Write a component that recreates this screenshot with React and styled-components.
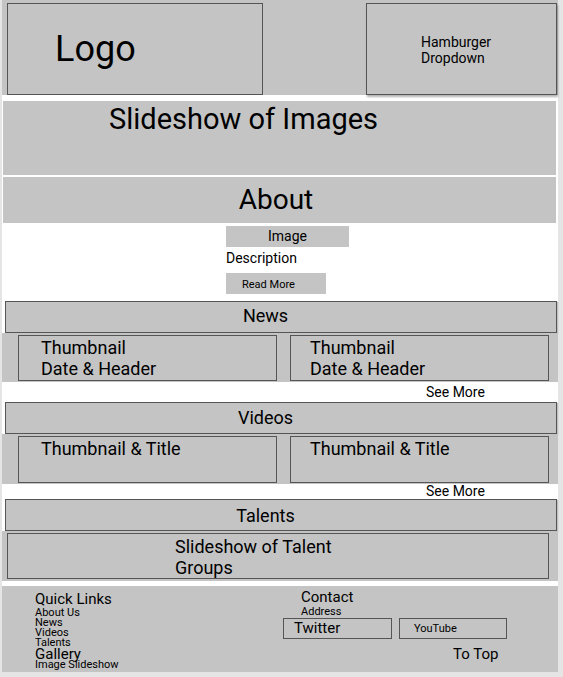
import React from 'react'
import styled, { createGlobalStyle } from 'styled-components'

const GlobalStyle = createGlobalStyle`
  body {
    margin: 0;
    background: #e5e5e5;
    font-family: Roboto, "Liberation Sans", sans-serif;
    color: #000;
  }
`

const Page = styled.div`
  width: 556px;
  margin-left: 2px;
  background: #fff;
  display: flex;
  flex-direction: column;
`

const Header = styled.header`
  height: 95px;
  box-sizing: border-box;
  background: #c4c4c4;
  display: flex;
  justify-content: space-between;
  align-items: flex-start;
  padding: 3px 1px 0 5px;
`

const LogoBox = styled.div`
  width: 256px;
  height: 92px;
  box-sizing: border-box;
  border: 1px solid #555;
  display: flex;
  align-items: center;
  padding-left: 47px;
  font-size: 36px;
`

const MenuBox = styled.div`
  width: 191px;
  height: 92px;
  box-sizing: border-box;
  border: 1px solid #555;
  box-shadow: 1px 2px 2px rgba(0, 0, 0, 0.3);
  display: flex;
  flex-direction: column;
  justify-content: center;
  padding: 2px 0 0 54px;
  font-size: 14px;
  line-height: 16px;
`

const Slideshow = styled.div`
  margin: 6px 2px 0 1px;
  height: 74px;
  background: #c4c4c4;
  padding-left: 106px;
  font-size: 29px;
  line-height: 36px;
`

const AboutBar = styled.div`
  margin: 2px 2px 0 1px;
  height: 46px;
  background: #c4c4c4;
  text-align: center;
  padding-right: 7px;
  font-size: 28px;
  line-height: 46px;
`

const AboutBody = styled.div`
  height: 78px;
  display: flex;
  flex-direction: column;
  align-items: flex-start;
  padding-left: 224px;
  font-size: 14px;
`

const ImageBox = styled.div`
  margin-top: 3px;
  width: 123px;
  height: 21px;
  background: #c4c4c4;
  text-align: center;
  line-height: 21px;
`

const Description = styled.div`
  margin-top: 3px;
  line-height: 16px;
`

const ReadMore = styled.div`
  margin-top: 7px;
  width: 100px;
  height: 21px;
  box-sizing: border-box;
  background: #c4c4c4;
  padding-left: 16px;
  font-size: 11px;
  line-height: 23px;
`

const SectionHeader = styled.div`
  margin: 0 1px 0 3px;
  height: 32px;
  box-sizing: border-box;
  background: #c4c4c4;
  border: 1px solid #555;
  box-shadow: 1px 1px 1px rgba(0, 0, 0, 0.25);
  text-align: center;
  padding-right: 31px;
  font-size: 18px;
  line-height: ${p => p.$lh || 29}px;
`

const Row = styled.div`
  background: #c4c4c4;
  height: ${p => p.$h}px;
  display: flex;
  align-items: flex-start;
  gap: 13px;
  padding: 2px 0 0 ${p => p.$left}px;
  box-sizing: border-box;
`

const Card = styled.div`
  width: ${p => p.$w || 259}px;
  height: ${p => p.$h || 46}px;
  box-sizing: border-box;
  border: 1px solid #555;
  padding: ${p => p.$top || 1}px 0 0 ${p => p.$left || 21}px;
  font-size: 18px;
  line-height: 21px;
`

const Line = styled.div``

const SeeMore = styled.div`
  height: ${p => p.$h}px;
  padding-left: 424px;
  font-size: 14px;
  line-height: ${p => p.$h}px;
`

const Gap = styled.div`
  height: 5px;
`

const Footer = styled.footer`
  height: 86px;
  box-sizing: border-box;
  background: #c4c4c4;
  display: grid;
  grid-template-columns: 248px 226px;
  padding: 4px 0 0 33px;
`

const LinkCol = styled.div`
  padding-top: 2px;
  display: flex;
  flex-direction: column;
`

const FootTitle = styled.div`
  font-size: 15px;
  line-height: ${p => p.$lh || 14}px;
  margin-bottom: ${p => p.$mb || 0}px;
`

const FootLink = styled.div`
  font-size: 11px;
  line-height: 10px;
`

const ContactCol = styled.div`
  display: flex;
  flex-direction: column;
`

const Indent = styled.div`
  padding-left: 18px;
  margin-top: ${p => p.$mt || 0}px;
  font-size: ${p => p.$size}px;
  line-height: ${p => p.$lh}px;
`

const Socials = styled.div`
  display: flex;
  gap: 7px;
`

const SocialBox = styled.div`
  width: ${p => p.$w}px;
  height: 21px;
  box-sizing: border-box;
  border: 1px solid #555;
  padding-left: ${p => p.$pad}px;
  font-size: ${p => p.$size}px;
  line-height: 19px;
`

const ToTop = styled.div`
  margin-top: 7px;
  padding-left: 170px;
  font-size: 15px;
  line-height: 16px;
`

const App = () => {
  return (
    <>
      <GlobalStyle />
      <Page>
        <Header>
          <LogoBox>Logo</LogoBox>
          <MenuBox>
            <Line>Hamburger</Line>
            <Line>Dropdown</Line>
          </MenuBox>
        </Header>

        <Slideshow>Slideshow of Images</Slideshow>
        <AboutBar>About</AboutBar>
        <AboutBody>
          <ImageBox>Image</ImageBox>
          <Description>Description</Description>
          <ReadMore>Read More</ReadMore>
        </AboutBody>

        <SectionHeader $lh={27}>News</SectionHeader>
        <Row $h={49} $left={16}>
          <Card $left={22}>
            <Line>Thumbnail</Line>
            <Line>Date &amp; Header</Line>
          </Card>
          <Card $left={19}>
            <Line>Thumbnail</Line>
            <Line>Date &amp; Header</Line>
          </Card>
        </Row>
        <SeeMore $h={20}>See More</SeeMore>

        <SectionHeader>Videos</SectionHeader>
        <Row $h={50} $left={16}>
          <Card $h={47} $top={1} $left={22}>
            <Line>Thumbnail &amp; Title</Line>
          </Card>
          <Card $h={47} $top={0} $left={19}>
            <Line>Thumbnail &amp; Title</Line>
          </Card>
        </Row>
        <SeeMore $h={15}>See More</SeeMore>

        <SectionHeader $lh={31}>Talents</SectionHeader>
        <Row $h={50} $left={5}>
          <Card $w={542} $h={46} $top={2} $left={167}>
            <Line>Slideshow of Talent</Line>
            <Line>Groups</Line>
          </Card>
        </Row>
        <Gap />

        <Footer>
          <LinkCol>
            <FootTitle $mb={2}>Quick Links</FootTitle>
            <FootLink>About Us</FootLink>
            <FootLink>News</FootLink>
            <FootLink>Videos</FootLink>
            <FootLink>Talents</FootLink>
            <FootTitle $lh={12}>Gallery</FootTitle>
            <FootLink>Image Slideshow</FootLink>
          </LinkCol>
          <ContactCol>
            <Indent $size={15} $lh={14}>Contact</Indent>
            <Indent $size={11} $lh={12} $mt={2}>Address</Indent>
            <Socials>
              <SocialBox $w={109} $pad={10} $size={15}>Twitter</SocialBox>
              <SocialBox $w={108} $pad={14} $size={11}>YouTube</SocialBox>
            </Socials>
            <ToTop>To Top</ToTop>
          </ContactCol>
        </Footer>
      </Page>
    </>
  )
}

export default App
